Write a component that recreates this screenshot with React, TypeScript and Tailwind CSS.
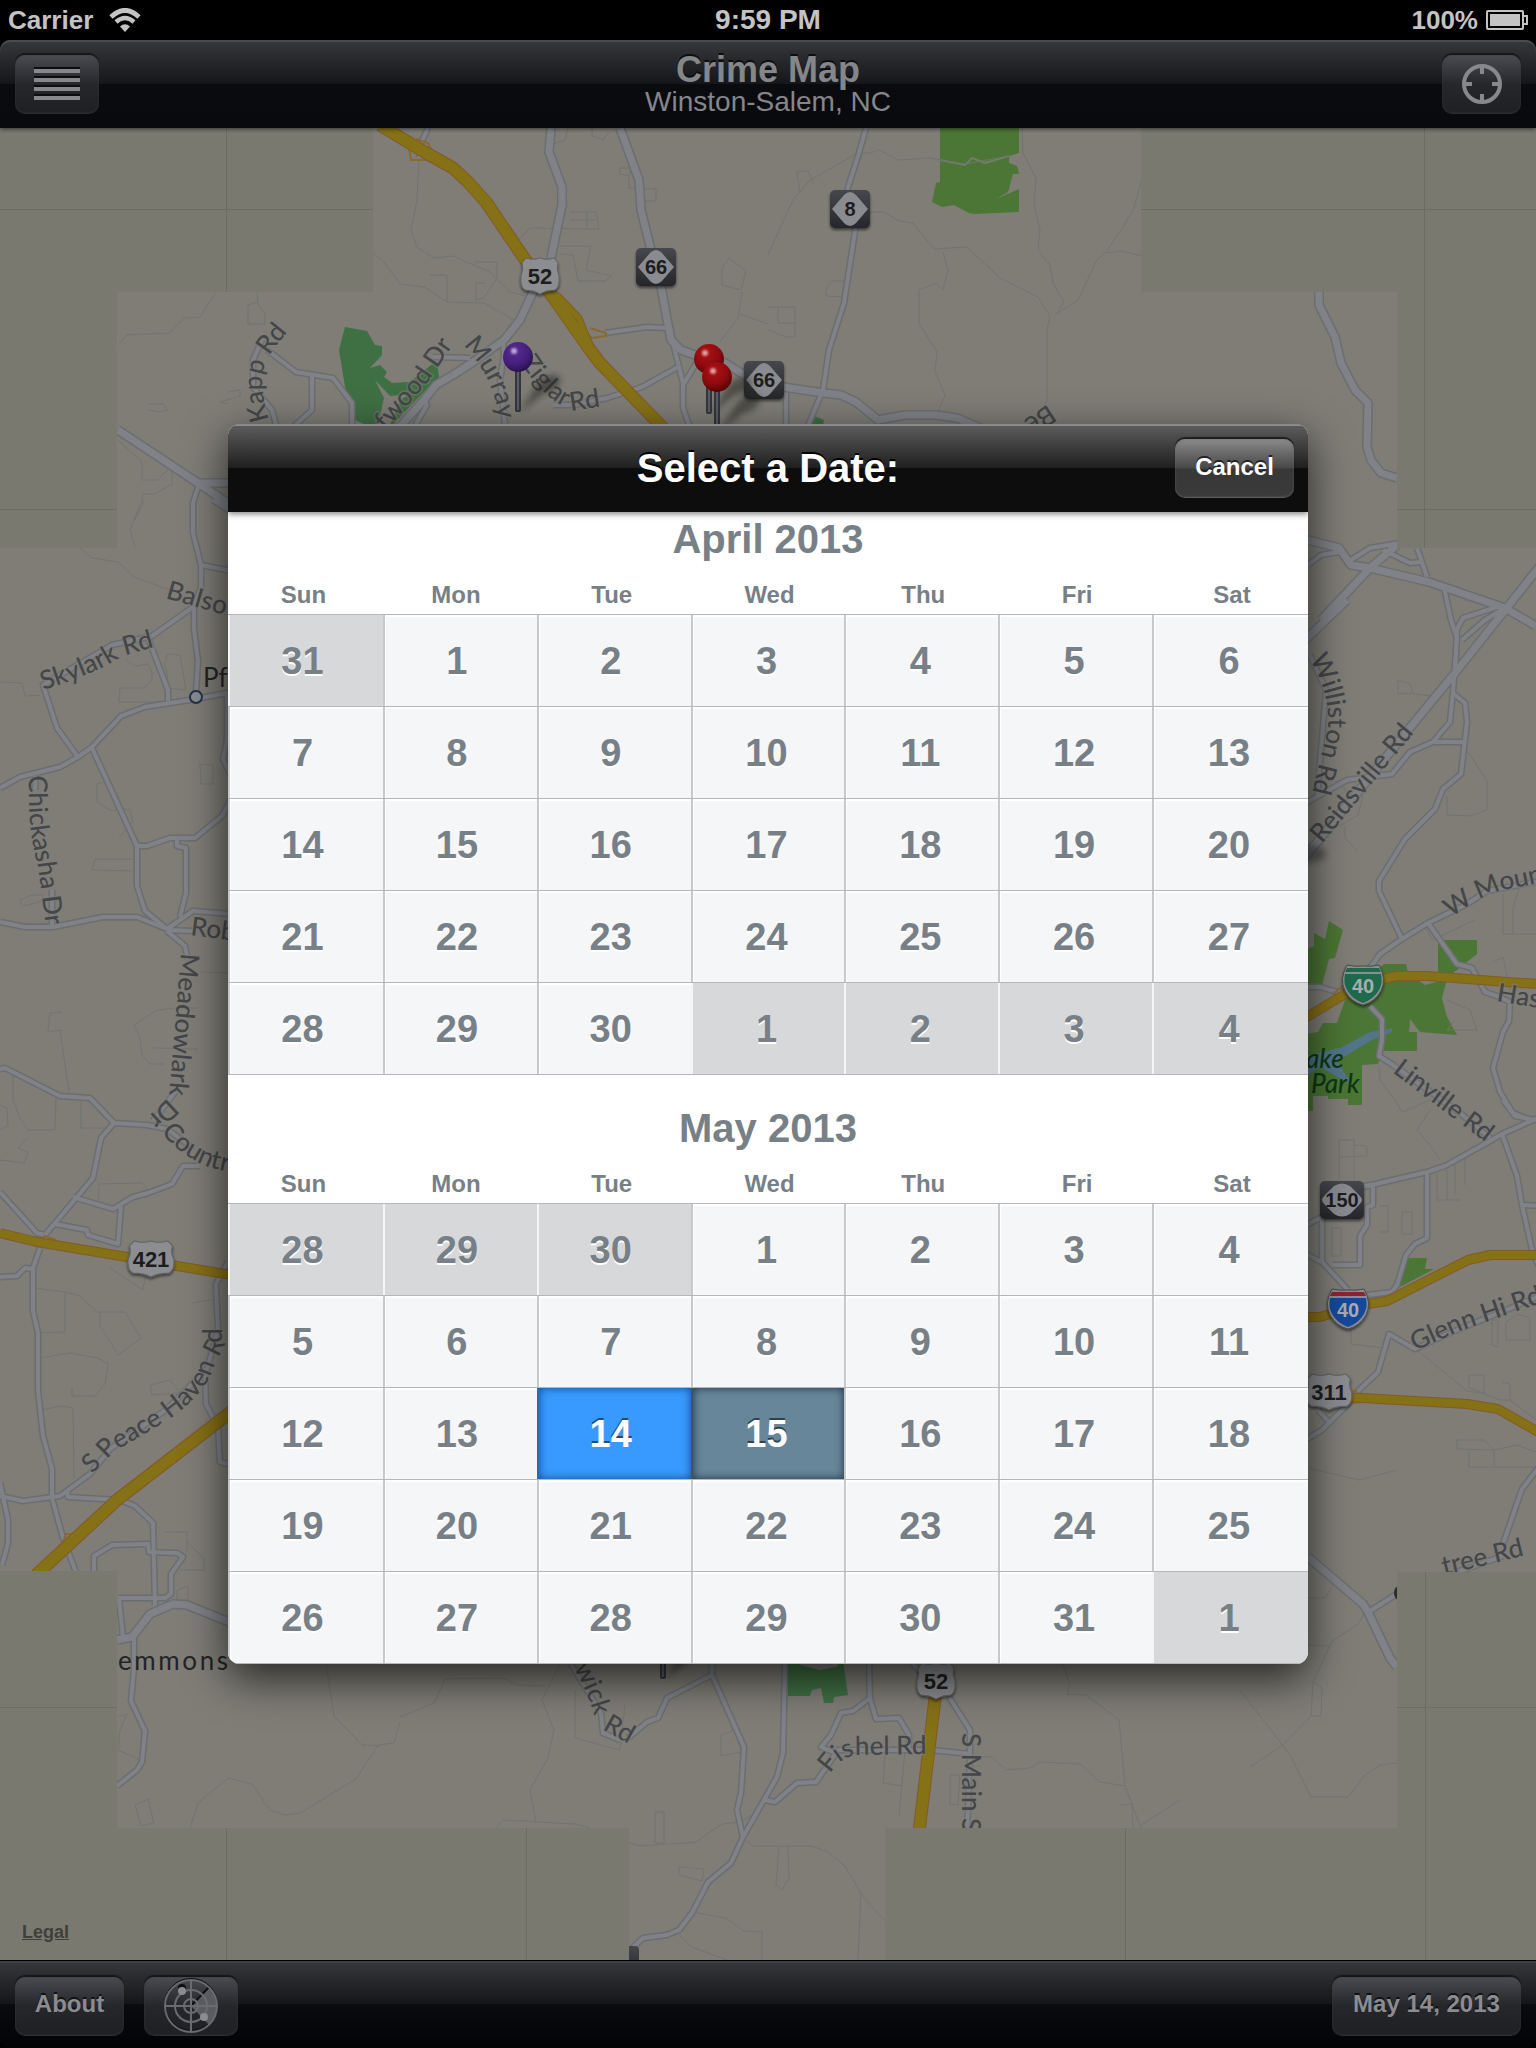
import React from "react";

const WEEKDAYS = ["Sun", "Mon", "Tue", "Wed", "Thu", "Fri", "Sat"];

type Kind = "in" | "out" | "selected" | "today";
type Day = { n: number; kind: Kind };
type Month = { title: string; first: number; prev: number; length: number; selected?: number; today?: number };

const MONTHS: Month[] = [
  { title: "April 2013", first: 1, prev: 31, length: 30 },
  { title: "May 2013", first: 3, prev: 30, length: 31, selected: 14, today: 15 },
];

function weeksOf(m: Month): Day[][] {
  const weeks: Day[][] = [];
  for (let w = 0; w < 5; w++) {
    const row: Day[] = [];
    for (let d = 0; d < 7; d++) {
      const n = w * 7 + d - m.first + 1;
      if (n < 1) row.push({ n: m.prev + n, kind: "out" });
      else if (n > m.length) row.push({ n: n - m.length, kind: "out" });
      else row.push({ n, kind: n === m.selected ? "selected" : n === m.today ? "today" : "in" });
    }
    weeks.push(row);
  }
  return weeks;
}

const CELL: Record<Kind, string> = {
  in: "border-l-2 border-l-[#c6c8ca] bg-[#f5f6f8] text-[#788087] shadow-[inset_1px_2px_0_#ffffff] [text-shadow:0_2px_0_#ffffff]",
  out: "border-l-2 border-l-[#f4f5f6] bg-[#d7d8da] text-[#788087] [text-shadow:0_2px_0_#ffffff]",
  selected:
    "border-l-2 border-l-[#2a6cb0] bg-[#3899fe] text-white shadow-[inset_0_0_8px_rgba(0,30,70,0.65)] [text-shadow:0_-2px_0_#2a4a6c]",
  today:
    "border-l-2 border-l-[#3f5462] bg-[#67869a] text-white shadow-[inset_0_0_8px_rgba(0,20,40,0.75)] [text-shadow:0_-2px_0_#2f4250]",
};

const DAY_PAD = ["pr-2", "pr-2", "pr-2", "pr-1", "pr-1", "pr-1", "pr-1"];
const HEAD_PAD = ["pr-1", "pr-2", "pr-1", "pl-1", "pl-1", "pl-1", "pl-1"];

function MonthGrid({ month }: { month: Month }) {
  return (
    <table className="w-full table-fixed border-separate border-spacing-0 border-b border-[#b5b7ba]">
      <caption className="h-[58px] pt-[3px] text-center text-[40px] leading-[48px] font-bold text-[#788087]">
        {month.title}
      </caption>
      <colgroup>
        <col className="w-[155px]" />
        <col />
        <col />
        <col />
        <col />
        <col />
        <col className="w-[156px]" />
      </colgroup>
      <thead>
        <tr>
          {WEEKDAYS.map((d, j) => (
            <th
              key={d}
              scope="col"
              className={"h-[44px] pt-[6px] text-center text-2xl leading-8 font-bold text-[#788087] " + HEAD_PAD[j]}
            >
              {d}
            </th>
          ))}
        </tr>
      </thead>
      <tbody>
        {weeksOf(month).map((week, i) => (
          <tr key={i}>
            {week.map((day, j) => (
              <td key={j} className="h-[92px] border-t border-[#b5b7ba] p-0">
                <button
                  type="button"
                  className={
                    "block h-[91px] w-full text-center text-[38px] leading-[46px] font-bold " +
                    DAY_PAD[j] +
                    " " +
                    CELL[day.kind]
                  }
                >
                  {day.n}
                </button>
              </td>
            ))}
          </tr>
        ))}
      </tbody>
    </table>
  );
}

/* ---------- map drawing ---------- */

const ROADS: { w: number; d: string[] }[] = [
  {
    w: 7,
    d: [
      "551,128 549,152 562,187 562,205 551,258",
      "534,290 520,320 504,340 473,362 453,375 436,385 424,400 397,430",
      "620,128 639,180 641,210 651,250 661,287 671,340 681,350 695,355 725,363 749,378 783,387 824,393 841,395 856,402 878,420 905,415 935,415 957,418 985,430",
      "1319,292 1319,305 1335,337 1341,363 1355,390 1368,403 1367,447 1371,460 1381,473 1397,478",
      "118,430 201,485 232,506",
      "201,483 232,483",
      "117,1640 132,1637 150,1614 173,1604 187,1605 232,1623",
      "1300,538 1339,548 1351,565 1370,568 1429,582 1505,608 1536,626",
      "1397,545 1370,568 1321,620",
      "1308,1557 1363,1604 1368,1612 1390,1658 1397,1667",
      "1540,566 1513,600 1455,673 1413,724 1300,863",
      "1347,600 1304,641",
    ],
  },
  {
    w: 4,
    d: [
      "428,128 421,143 419,158",
      "673,343 683,383 683,408 691,430",
      "683,385 697,362",
      "605,333 647,327 666,328",
      "553,405 573,405 607,398 642,387 678,367",
      "866,128 859,153 844,200",
      "856,225 844,303 829,350 823,390 807,428",
      "786,393 786,428",
      "433,357 470,358",
      "267,350 296,372 333,378 352,403 352,424",
      "312,373 312,410 292,428",
      "262,340 253,360 253,387 272,410 277,428",
      "503,338 504,355 500,380 505,424",
      "424,400 427,405 415,426",
      "198,487 193,503 193,533 201,565 201,587 194,607 194,629 198,661 196,692",
      "201,565 232,571",
      "213,500 232,512",
      "193,607 152,636 112,645 43,685 57,728 78,757",
      "148,638 168,690 168,701",
      "0,788 20,777 60,767 78,757 92,747 121,716 145,707 196,699 232,692",
      "92,748 137,846 137,886 145,911 167,929",
      "137,846 147,846 170,838 195,838 222,816 232,798",
      "177,838 177,846 186,848 186,893 180,917",
      "0,922 25,927 53,927 103,917 137,917 167,929 193,911 232,914",
      "167,930 192,931",
      "167,931 185,946 188,960",
      "227,692 227,741 223,759 232,778",
      "35,790 36,776",
      "52,890 52,925",
      "0,1069 5,1068 60,1096 90,1098 114,1123 147,1125 167,1129 190,1146",
      "175,1092 153,1121",
      "114,1123 101,1138 93,1178 45,1235",
      "0,1192 37,1233 45,1235",
      "73,1197 113,1209 133,1197 148,1193 172,1184 183,1166 200,1166",
      "121,1206 118,1244 88,1235 87,1230 55,1224",
      "40,1248 33,1268 33,1311 38,1333 38,1391 43,1436 52,1469 52,1498 63,1538 77,1575",
      "0,1277 17,1276 25,1268 33,1269",
      "228,1262 216,1284 218,1330 207,1369 167,1409 110,1449 90,1474 60,1496 23,1501 0,1496",
      "205,1369 206,1404 218,1427 220,1462 232,1465",
      "67,1490 68,1497 120,1500 135,1506 153,1523 155,1605",
      "0,1483 8,1520 8,1543 2,1565",
      "94,1575 94,1556 112,1545 148,1544 149,1552 177,1553 183,1557 171,1574 171,1594 165,1598 118,1598",
      "119,1599 123,1637",
      "134,1637 134,1668 131,1701 145,1731 142,1762 137,1770 117,1786",
      "1308,565 1321,555 1339,552",
      "1351,560 1370,548 1400,543",
      "1383,550 1410,563 1422,562",
      "1417,548 1427,577",
      "1444,587 1451,620 1457,638 1453,692 1450,722 1433,742 1410,752 1392,774 1347,780 1300,806",
      "1310,655 1326,690 1318,785 1318,796",
      "1500,606 1463,618 1457,629 1455,673",
      "1505,608 1485,620 1462,640",
      "1454,694 1465,703 1467,722 1461,774 1443,789 1435,809 1405,839 1379,881 1379,891 1402,939",
      "1433,742 1463,742",
      "1360,980 1373,964 1380,954 1402,939 1428,923 1467,904 1487,891 1540,881",
      "1428,923 1457,964 1472,968 1485,992 1497,996 1510,1002 1509,1021 1503,1032 1493,1068 1500,1092 1513,1113 1530,1120",
      "1300,987 1320,987 1337,992 1350,992",
      "1370,1006 1382,1019 1382,1040 1379,1056 1393,1065 1460,1113 1490,1138",
      "1350,1190 1363,1187 1397,1179 1427,1172 1445,1166 1483,1145 1502,1134 1540,1117",
      "1502,1134 1517,1176 1522,1205 1533,1254 1540,1268",
      "1522,1205 1540,1206",
      "1503,1100 1515,1116 1540,1121",
      "1427,1174 1427,1238 1415,1244 1406,1255 1397,1285 1392,1292 1367,1295",
      "1362,1186 1373,1185 1373,1205 1367,1207 1367,1225 1360,1236 1360,1265 1333,1265",
      "1300,1228 1322,1217 1322,1261",
      "1300,1254 1308,1255 1323,1263 1348,1290",
      "1357,1392 1378,1372 1389,1334 1415,1349 1445,1335 1540,1296",
      "1300,1443 1322,1430 1350,1402",
      "1318,1410 1328,1421",
      "1540,1466 1522,1489 1503,1544",
      "1440,1578 1503,1556",
      "1370,1611 1400,1592",
      "712,1660 712,1675 744,1747 741,1793 737,1810 743,1837",
      "712,1675 667,1698 658,1718 647,1722 628,1738",
      "785,1660 783,1753 777,1777 743,1837 731,1863 708,1882 692,1913 679,1930 667,1935 643,1938 628,1952",
      "765,1800 775,1802 797,1783 816,1782 836,1753 821,1747 831,1735 841,1713 853,1711 870,1698 869,1660",
      "870,1698 876,1719 899,1718 909,1735 909,1752",
      "836,1750 931,1750 971,1754",
      "949,1697 970,1730 970,1757 967,1832",
      "910,1660 920,1672",
      "571,1664 601,1713 603,1733 620,1740",
    ],
  },
];

const LANES = [
  "419,158 417,200 411,230 417,247 434,258 453,256 490,272 510,292 525,296",
  "373,253 384,262 400,284 424,287 447,302 484,303 514,320",
  "474,262 497,262 497,278 484,298 476,300 476,283 485,283",
  "430,275 447,275 447,302",
  "560,246 591,246 586,270 612,276 605,281 578,281 573,255 560,254",
  "519,240 530,228 599,229 596,212 570,212",
  "587,212 587,228",
  "570,220 595,220",
  "550,145 565,140 568,128",
  "620,168 630,168 630,176 620,174 620,168",
  "629,176 629,188 656,189 656,201 641,201",
  "592,128 592,136 603,140 609,132",
  "722,285 722,268 729,258 746,271 741,290 722,285",
  "742,292 738,318 720,342",
  "740,314 768,324",
  "768,255 793,200 810,180 858,153 870,153 879,150 899,160 930,158 965,164 1009,156",
  "800,193 797,172 808,171 814,184",
  "856,212 884,212 899,221 913,223 934,249 967,247 1000,278 1038,297 1050,316 1047,330 1047,400 1042,412",
  "943,252 948,270 943,290 936,283 919,290 919,323 937,352 935,372 945,395 938,412",
  "1022,128 1023,153 1036,178 1034,205 1040,230 1038,250 1050,265 1053,283 1064,302 1057,314",
  "1055,315 1078,300 1097,260 1106,252 1123,227 1134,208 1141,182",
  "1106,253 1122,251 1141,256",
  "844,281 832,281 826,290 826,296 843,297",
  "768,307 795,307 795,337 786,337 768,330",
  "778,307 778,323 795,323",
  "216,292 200,317 184,318 169,333 127,335 118,345",
  "257,292 258,304 265,314 265,324 248,324 248,305 257,302",
  "118,440 142,462 142,480 158,480 172,465 172,484 155,494 142,494 143,503 135,520",
  "148,404 163,404 168,410 160,412 148,410",
  "142,500 130,530 135,547",
  "228,404 220,402 240,396 240,390 228,392",
  "80,548 92,558 118,562 134,577 170,590",
  "0,682 22,683 25,696 40,695",
  "126,660 135,666 148,664 152,672 152,680 145,688 120,688 119,702 168,702",
  "167,654 180,655 186,690 168,688 167,672 165,665 167,654",
  "200,764 213,765 213,784 201,784 200,764",
  "97,784 104,782 119,797 118,808 130,810 133,821 119,838",
  "119,810 110,810 97,802 97,784",
  "137,859 95,859 92,870 137,871",
  "20,900 32,895 44,895 40,902 22,906 20,900",
  "62,1012 50,1013 48,1032 60,1030 69,1092",
  "198,1008 175,1008 157,1010 134,1025 140,1038 142,1055 150,1064 165,1064",
  "153,1048 198,1049",
  "200,972 228,973",
  "13,1075 13,1100 20,1118 28,1130 55,1130 56,1096",
  "81,1100 81,1128 112,1128",
  "0,1105 7,1108 8,1126 0,1130",
  "28,1137 18,1148 28,1152 24,1163 0,1160",
  "98,1200 99,1184 142,1183 150,1192",
  "35,1288 65,1292 65,1332 38,1333",
  "65,1292 80,1296 97,1312 125,1312 141,1338 118,1355 108,1338 100,1326 100,1312",
  "40,1358 70,1353 98,1358 108,1364 105,1384 95,1396 72,1396 72,1388",
  "73,1408 74,1478",
  "42,1410 60,1406 73,1408",
  "150,1385 170,1380 180,1393 152,1395 150,1385",
  "192,1303 215,1299",
  "110,1268 143,1290 145,1278",
  "165,1532 187,1532 187,1552",
  "187,1542 204,1558 204,1570 180,1570",
  "177,1590 177,1600 188,1600 188,1586 177,1590",
  "118,1717 127,1714 120,1730 118,1750 140,1760",
  "135,1805 148,1799 154,1823 141,1826 135,1805",
  "190,1828 198,1803 228,1778 252,1784 270,1810 284,1815 300,1813 356,1779 378,1745 394,1743 400,1722",
  "326,1664 334,1716 362,1745 380,1746",
  "400,1717 434,1703 445,1679 503,1678 517,1685 545,1686",
  "560,1664 542,1700 554,1730 548,1758 530,1790 536,1822",
  "496,1828 503,1820 575,1824 590,1828",
  "575,1690 575,1738 620,1750 625,1705",
  "655,1812 664,1812 664,1843 655,1843 655,1812",
  "629,1843 640,1846 696,1842 722,1824 740,1822 752,1815",
  "743,1838 753,1846 812,1846 828,1852 845,1866 861,1893 868,1903 885,1921",
  "861,1893 858,1960",
  "779,1846 776,1885 782,1890 789,1878 788,1846",
  "679,1867 704,1869 702,1881 679,1875 679,1867",
  "692,1912 726,1918 744,1931 762,1932 762,1960",
  "679,1935 692,1947 727,1960",
  "885,1755 883,1783 902,1786",
  "905,1750 900,1805 899,1816",
  "1063,1664 1070,1685 1067,1694 1086,1695 1119,1720 1125,1786 1141,1828",
  "970,1757 992,1757 1006,1770 1030,1768 1040,1762 1080,1764 1100,1782 1125,1786",
  "1141,1825 1180,1800",
  "950,1775 960,1775 958,1805 950,1804 950,1775",
  "1119,1805 1132,1804 1133,1828",
  "721,1735 735,1730 741,1752 721,1756 721,1735",
  "1398,680 1410,684 1413,693 1398,694 1398,680",
  "1413,694 1432,696",
  "1450,740 1468,752 1487,781 1487,810 1470,816 1447,815 1447,796",
  "1340,780 1348,795 1363,795 1358,815 1340,826",
  "1345,826 1345,838 1356,850",
  "1465,600 1490,606",
  "1503,894 1503,934 1540,934",
  "1520,885 1513,908 1513,934",
  "1493,962 1503,957 1510,990",
  "1475,920 1432,940 1425,925",
  "1447,1000 1470,1010 1477,1030 1447,1030 1455,1020",
  "1379,1066 1380,1080 1395,1100 1402,1112 1430,1100",
  "1430,1110 1417,1130 1430,1145 1440,1160",
  "1339,1140 1354,1140 1354,1145 1367,1146 1367,1156 1339,1157",
  "1339,1140 1339,1180",
  "1354,1145 1354,1180",
  "1437,1174 1437,1200 1460,1200",
  "1447,1170 1447,1200",
  "1455,1160 1455,1195",
  "1465,1155 1465,1185",
  "1380,1206 1388,1206 1388,1232 1380,1232",
  "1402,1212 1412,1212 1412,1234 1402,1234 1402,1212",
  "1332,1228 1341,1228 1341,1256 1332,1256 1332,1228",
  "1351,1320 1351,1344 1382,1348",
  "1417,1350 1467,1391 1482,1393 1500,1400 1510,1400 1540,1423",
  "1469,1375 1484,1375 1484,1393 1469,1388 1469,1375",
  "1502,1382 1510,1384 1510,1400",
  "1492,1320 1498,1320 1498,1347 1492,1345 1492,1320",
  "1506,1340 1506,1322 1518,1314 1530,1318 1530,1340 1506,1340",
  "1457,1440 1484,1440 1494,1450 1517,1445 1536,1452",
  "1457,1440 1457,1449 1494,1450 1494,1467 1540,1467",
  "1469,1450 1469,1467 1494,1467",
  "1308,1468 1359,1480 1397,1470",
  "1308,1598 1325,1598 1335,1582",
  "1365,1612 1358,1624 1332,1641 1313,1682 1322,1688 1321,1716 1311,1716 1313,1682",
  "1308,1645 1330,1646",
  "1311,1716 1283,1745 1250,1767",
  "1240,1690 1290,1755 1311,1797 1348,1797 1365,1775 1380,1765 1397,1763",
];

const HIGHWAYS: { w: number; d: string[] }[] = [
  {
    w: 11,
    d: [
      "380,125 421,150 453,168 468,182 486,202 524,258 553,297 588,347 600,363 665,430",
      "232,1411 117,1500 36,1575",
      "936,1690 919,1832",
    ],
  },
  {
    w: 5,
    d: ["557,295 579,318 592,350"],
  },
  {
    w: 8,
    d: [
      "0,1233 37,1242 127,1257 177,1266 232,1275",
      "1300,1021 1345,994 1383,979 1397,976 1427,976 1507,982 1540,984",
      "1300,1317 1320,1317 1330,1314 1368,1304 1387,1301 1468,1260 1490,1255 1540,1255",
      "1345,1397 1467,1404 1498,1409 1540,1433",
    ],
  },
];

const RAMPS = [
  "409,147 411,160 425,160 434,155 428,143 416,139",
  "583,330 592,338 606,336 606,333 590,328",
  "37,1242 45,1236 56,1240",
  "56,1560 66,1534 76,1534",
  "1333,994 1345,984",
  "1345,1391 1357,1391",
  "1345,1404 1380,1400",
];

const LABELS: { id: string; text: string; d: string }[] = [
  { id: "kapp", text: "Kapp Rd", d: "M269,420 Q256,378 268,358 Q276,344 300,318" },
  { id: "drift", text: "fwood Dr", d: "M386,431 L428,382 L466,326" },
  { id: "murray", text: "Murray R", d: "M463,345 Q490,374 496,404 L506,470" },
  { id: "ziglar", text: "Ziglar Rd", d: "M520,362 Q550,408 578,410 L630,402" },
  { id: "bethania", text: "Be", d: "M1048,404 L990,442" },
  { id: "balsom", text: "Balso", d: "M165,598 L228,616 L300,636" },
  { id: "skylark", text: "Skylark Rd", d: "M43,690 Q96,674 122,656 L180,640" },
  { id: "chick", text: "Chickasha Dr", d: "M29,775 Q27,830 38,866 L49,950" },
  { id: "rob", text: "Rob", d: "M190,935 L228,940 L350,950" },
  { id: "meadow", text: "Meadowlark", d: "M181,953 L168,1110" },
  { id: "meadowdr", text: "Dr", d: "M168,1098 L136,1128" },
  { id: "country", text: "Country", d: "M161,1132 Q182,1158 212,1168 L310,1190" },
  { id: "peace", text: "S Peace Haven Rd", d: "M92,1474 L114,1452 L168,1420 Q206,1394 214,1366 L222,1350 L222,1280" },
  { id: "willis", text: "Williston Rd", d: "M1309,659 Q1330,690 1328,728 L1308,810" },
  { id: "reids", text: "Reidsville Rd", d: "M1322,844 L1438,704" },
  { id: "mount", text: "W Moun", d: "M1451,918 Q1480,896 1504,890 L1700,850" },
  { id: "hast", text: "Has", d: "M1496,1001 L1600,1018" },
  { id: "linv", text: "Linville Rd", d: "M1392,1072 L1510,1161" },
  { id: "glenn", text: "Glenn Hi Rd", d: "M1415,1351 L1460,1331 L1570,1293" },
  { id: "tree", text: "tree Rd", d: "M1444,1575 L1478,1567 L1550,1549" },
  { id: "warwick", text: "arwick", d: "M560,1650 Q594,1690 601,1750" },
  { id: "warwickrd", text: "Rd", d: "M602,1729 L650,1756" },
  { id: "fishel", text: "Fishel Rd", d: "M830,1774 Q842,1754 862,1755 L940,1754" },
  { id: "smain", text: "S Main S", d: "M962,1733 L962,1870" },
];

const MAP_FONT = "font-['Lato','Open_Sans',sans-serif]";
const UI_FONT = "font-['Liberation_Sans',Arial,sans-serif]";

function UsShield({ x, y, text, sx = 1 }: { x: number; y: number; text: string; sx?: number }) {
  return (
    <g transform={`translate(${x} ${y})`}>
      <g transform={`scale(${sx} 1)`}>
        <path
          d="M-14,-18 L-10,-17 Q-5,-16 0,-18 Q5,-16 10,-17 L14,-18 L18,-13 Q16,-7 19,0 Q20,11 15,14 Q6,14 0,18 Q-6,14 -15,14 Q-20,11 -19,0 Q-16,-7 -18,-13Z"
          fill="#8c8d91"
          stroke="#626366"
          strokeWidth="1"
          filter="url(#drop)"
        />
      </g>
      <text y="8" textAnchor="middle" fill="#1c1d20" className={"text-[22px] font-bold " + UI_FONT}>
        {text}
      </text>
    </g>
  );
}

function StateShield({ x, y, text, wide = false }: { x: number; y: number; text: string; wide?: boolean }) {
  return (
    <g transform={`translate(${x} ${y})`}>
      <rect x={wide ? -22 : -20} y="-19" width={wide ? 44 : 40} height="38" rx="5" fill="url(#plate)" filter="url(#drop)" />
      <path
        d={
          wide
            ? "M-20,0 Q-20,-2 -17,-5 L-8,-14 Q0,-19 8,-14 L17,-5 Q20,-2 20,0 Q20,2 17,5 L8,14 Q0,19 -8,14 L-17,5 Q-20,2 -20,0Z"
            : "M-18,0 L-6,-14 Q0,-20 6,-14 L18,0 L6,14 Q0,20 -6,14Z"
        }
        fill="#8a8b90"
      />
      <text y="7" textAnchor="middle" fill="#1c1d20" className={"text-xl font-bold " + UI_FONT}>
        {text}
      </text>
    </g>
  );
}

function Interstate({ x, y, fill, band }: { x: number; y: number; fill: string; band: string }) {
  return (
    <g transform={`translate(${x} ${y})`}>
      <path
        d="M-16,-20 Q-8,-18 0,-19 Q8,-18 16,-20 Q24,-6 18,6 Q12,17 0,20 Q-12,17 -18,6 Q-24,-6 -16,-20Z"
        fill="#8c8e91"
        stroke="#4a4b4e"
        filter="url(#drop)"
      />
      <path d="M-16,-17 H16 L18,-13 H-18Z" fill={band} />
      <path d="M-18,-11 H18 Q20,-2 16,5 Q11,14 0,18 Q-11,14 -16,5 Q-20,-2 -18,-11Z" fill={fill} />
      <text y="8" textAnchor="middle" fill="#a8acaf" className={"text-xl font-bold " + UI_FONT}>
        40
      </text>
    </g>
  );
}

function Pin({ x, y, color, stem = 55 }: { x: number; y: number; color: "red" | "purple"; stem?: number }) {
  return (
    <g transform={`translate(${x} ${y})`}>
      <path d={`M2,${stem} L20,26 Q30,14 42,20 Q44,32 26,36 Z`} fill="#1a1a18" opacity="0.5" filter="url(#soft)" />
      <rect x="-3" y="10" width="6" height={stem - 10} rx="2" fill="#33363d" />
      <rect x="-1" y="10" width="2" height={stem - 12} fill="#595d65" />
      <circle r="15" fill={color === "red" ? "url(#pinRed)" : "url(#pinPurple)"} />
      <ellipse cx="-4" cy="-6" rx="3" ry="3" fill="#ffffff" opacity="0.6" filter="url(#shine)" />
    </g>
  );
}

function CrimeMap() {
  return (
    <svg
      className="absolute inset-0 h-full w-full"
      viewBox="0 128 1536 1832"
      preserveAspectRatio="xMidYMid slice"
      role="img"
      aria-label="Map of Winston-Salem"
    >
      <defs>
        <filter id="drop" x="-30%" y="-30%" width="160%" height="170%">
          <feDropShadow dx="0" dy="2" stdDeviation="1.5" floodColor="#000000" floodOpacity="0.55" />
        </filter>
        <filter id="soft" x="-50%" y="-50%" width="200%" height="200%">
          <feGaussianBlur stdDeviation="3" />
        </filter>
        <filter id="shine" x="-50%" y="-50%" width="200%" height="200%">
          <feGaussianBlur stdDeviation="1.2" />
        </filter>
        <linearGradient id="plate" x1="0" y1="0" x2="0" y2="1">
          <stop offset="0" stopColor="#46474c" />
          <stop offset="1" stopColor="#26272b" />
        </linearGradient>
        <radialGradient id="pinRed" cx="0.4" cy="0.3" r="0.75">
          <stop offset="0" stopColor="#b01216" />
          <stop offset="0.6" stopColor="#8c0a0e" />
          <stop offset="1" stopColor="#4c0406" />
        </radialGradient>
        <radialGradient id="pinPurple" cx="0.4" cy="0.3" r="0.75">
          <stop offset="0" stopColor="#5a2c94" />
          <stop offset="0.6" stopColor="#43207a" />
          <stop offset="1" stopColor="#260f48" />
        </radialGradient>
        {LABELS.map((l) => (
          <path key={l.id} id={l.id} d={l.d} />
        ))}
      </defs>

      <rect y="128" width="1536" height="1832" fill="#7f7d76" />

      <g fill="#4c7635">
        <path d="M940,128 V182 L936,183 L932,202 L942,207 L954,205 L969,213 L974,214 L1019,212 V189 L996,199 L1008,192 L1013,174 H1019 L1017,166 L1009,163 V156 L1019,153 V128Z" />
        <path d="M1329,921 L1343,930 L1335,958 L1329,959 L1322,985 L1300,983 V952 L1314,946 V933 L1325,939Z" />
        <path d="M1384,964 H1406 L1408,973 L1425,985 L1447,979 L1442,998 L1447,1017 L1457,1035 L1420,1032 L1410,1019 L1409,1032 H1417 V1051 H1383 L1378,1064 L1362,1065 V1105 H1348 V1099 H1328 V1096 H1313 V1111 H1300 V1035 L1318,1032 L1323,1023 H1337 L1345,1000Z" />
        <path d="M1438,940 H1477 V954 L1453,973 H1438Z" />
        <path d="M1408,1258 H1427 L1425,1269 H1434 L1398,1288Z" />
        <path d="M1348,1098 H1361 V1104 H1348Z" />
      </g>
      <g fill="#3f7043">
        <path d="M345,327 L367,331 L375,345 L382,346 V355 L370,368 L380,365 L387,372 L384,377 L392,383 L409,382 L419,375 L431,365 L437,363 L439,377 L416,400 L388,430 L400,400 L410,394 L390,396 L375,380 L384,398 L377,430 L355,420 L345,387 L339,350Z" />
        <path d="M788,1660 H843 L848,1695 L834,1697 L833,1703 H824 L821,1688 L812,1690 L810,1696 H788Z" />
        <path d="M814,416 L824,420 L822,430 H810Z" />
      </g>
      <path d="M788,1660 H843 L836,1667 L820,1670 L804,1666Z" fill="#7f7d76" />
      <path
        d="M1300,1057 L1340,1048 L1370,1032 L1392,1028 V1032 L1372,1040 L1337,1061 L1353,1086 L1320,1067 L1300,1080Z"
        fill="#53758a"
      />
      <path d="M940,160 L965,165 L972,158 L985,163 L1009,156" fill="none" stroke="#6f7f68" strokeWidth="2" />

      <g fill="none" stroke="#71746f" strokeWidth="1">
        {LANES.map((p) => (
          <polyline key={p} points={p} />
        ))}
      </g>

      <g fill="none" strokeLinejoin="round" stroke="#6b6e71">
        {ROADS.map((r) => r.d.map((p) => <polyline key={p} points={p} strokeWidth={r.w + 3} />))}
      </g>
      <g fill="none" strokeLinejoin="round" stroke="#808287">
        {ROADS.map((r) => r.d.map((p) => <polyline key={p} points={p} strokeWidth={r.w} />))}
      </g>
      <g fill="none" stroke="#8a6a30" strokeWidth="2">
        {RAMPS.map((p) => (
          <polyline key={p} points={p} />
        ))}
      </g>
      <g fill="none" strokeLinejoin="round" stroke="#84592a">
        {HIGHWAYS.map((r) => r.d.map((p) => <polyline key={p} points={p} strokeWidth={r.w + 2} />))}
      </g>
      <g fill="none" strokeLinejoin="round" stroke="#857116">
        {HIGHWAYS.map((r) => r.d.map((p) => <polyline key={p} points={p} strokeWidth={r.w} />))}
      </g>

      <g
        fill="#454648"
        stroke="#807f7a"
        strokeWidth="3"
        strokeOpacity="0.5"
        paintOrder="stroke"
        className={"text-[26px] font-medium " + MAP_FONT}
      >
        {LABELS.map((l) => (
          <text key={l.id}>
            <textPath href={"#" + l.id}>{l.text}</textPath>
          </text>
        ))}
      </g>
      <text x="203" y="687" fill="#232426" className={"text-[26px] " + MAP_FONT}>
        Pf
      </text>
      <text x="118" y="1670" fill="#232426" className={"text-[26px] tracking-widest " + MAP_FONT}>
        emmons
      </text>
      <g fill="#0b3a12" className={"text-[26px] font-medium italic " + MAP_FONT}>
        <text x="1306" y="1068">ake</text>
        <text x="1311" y="1093">Park</text>
      </g>
      <circle cx="196" cy="697" r="6" fill="#8a8c8e" stroke="#22334a" strokeWidth="2" />
      <ellipse cx="1399" cy="1593" rx="5" ry="7" fill="#2c2d2e" />
      <ellipse cx="1308" cy="854" rx="18" ry="9" fill="#1c1c1a" opacity="0.4" filter="url(#soft)" />
      <rect x="610" y="1946" width="29" height="30" rx="4" fill="url(#plate)" />

      <g fill="#7a796f">
        <path d="M0,128 H373 V292 H117 V548 H0Z" />
        <path d="M1141,128 H1536 V548 H1397 V292 H1141Z" />
        <path d="M0,1571 H117 V1828 H629 V1960 H0Z" />
        <path d="M1397,1572 H1536 V1960 H885 V1828 H1397Z" />
      </g>
      <g fill="none" stroke="#6d6c62" strokeWidth="1">
        <path d="M0,209.500 H373 M226.500,128 V292 M0,509.500 H117" />
        <path d="M1141,209.500 H1536 M1424.500,128 V548 M1397,509.500 H1536" />
        <path d="M0,1707.500 H117 M226.500,1828 V1960 M526.500,1828 V1960" />
        <path d="M1397,1707.500 H1536 M1425.500,1572 V1960 M1125.500,1828 V1960" />
      </g>

      <StateShield x={656} y={267} text="66" />
      <StateShield x={764} y={380} text="66" />
      <StateShield x={850} y={209} text="8" />
      <StateShield x={1342} y={1200} text="150" wide />
      <UsShield x={540} y={276} text="52" />
      <UsShield x={936} y={1681} text="52" />
      <UsShield x={151} y={1259} text="421" sx={1.2} />
      <UsShield x={1329} y={1392} text="311" sx={1.2} />
      <Interstate x={1363} y={985} fill="#1d6a4c" band="#1d6a4c" />
      <Interstate x={1348} y={1309} fill="#14499c" band="#8c2430" />

      <Pin x={518} y={357} color="purple" />
      <Pin x={709} y={359} color="red" />
      <Pin x={717} y={377} color="red" />
      <Pin x={663} y={1624} color="red" />
    </svg>
  );
}

/* ---------- chrome ---------- */

const BAR_BUTTON =
  "flex h-[58px] items-center justify-center rounded-[10px] bg-linear-to-b from-[#4b4c51] from-0% via-[#26272b] via-50% to-[#1f2024] text-2xl font-bold text-[#8b8c90] shadow-[0_-2px_1px_rgba(0,0,0,0.5),0_1px_0_#2c2d31,inset_0_0_2px_#3a3b3f] [text-shadow:0_-2px_0_#101114]";

function StatusBar() {
  return (
    <div className="grid h-10 grid-cols-3 items-center bg-black px-2 font-bold text-[#c3c3c3]">
      <div className="flex items-center gap-4 text-[26px] leading-10">
        <span>Carrier</span>
        <svg width="32" height="24" viewBox="0 0 32 24" fill="none" stroke="#c3c3c3" aria-label="Wi-Fi">
          <path d="M2,9 Q16,-4 30,9" strokeWidth="5" />
          <path d="M7,14 Q16,6 25,14" strokeWidth="4.500" />
          <path d="M16,24 L11,18.500 Q16,14 21,18.500Z" fill="#c3c3c3" stroke="none" />
        </svg>
      </div>
      <div className="text-center text-[28px] leading-10">9:59 PM</div>
      <div className="flex items-center justify-end gap-2 text-[26px] leading-10">
        <span>100%</span>
        <svg width="42" height="20" viewBox="0 0 42 20" aria-label="Battery full">
          <rect x="1" y="1" width="36" height="18" rx="1" fill="none" stroke="#c3c3c3" strokeWidth="2" />
          <rect x="4" y="4" width="30" height="12" fill="#c3c3c3" />
          <path d="M38,6 H41 V14 H38" fill="none" stroke="#c3c3c3" strokeWidth="2" />
        </svg>
      </div>
    </div>
  );
}

function NavBar() {
  return (
    <header className="relative z-10 grid h-[88px] grid-cols-[1fr_auto_1fr] items-center rounded-t-[10px] bg-[linear-gradient(#37383c_0%,#151619_50%,#0a0b0f_50%,#090a0e_100%)] px-[15px] shadow-[inset_0_2px_0_#4a4b4f,0_1px_4px_rgba(0,0,0,0.6)]">
      <button type="button" aria-label="Menu" className={BAR_BUTTON + " w-[84px]"}>
        <svg width="46" height="34" viewBox="0 0 46 34">
          <path d="M0,2 H46 M0,11 H46 M0,20 H46 M0,29 H46" stroke="#0c0d10" strokeWidth="4" />
          <path d="M0,4 H46 M0,13 H46 M0,22 H46 M0,31 H46" stroke="#87888c" strokeWidth="4" />
        </svg>
      </button>
      <div className="text-center text-[#85868a] [text-shadow:0_-2px_0_#0c0d10]">
        <h1 className="text-4xl leading-9 font-bold">Crime Map</h1>
        <p className="text-[28px] leading-7">Winston-Salem, NC</p>
      </div>
      <button type="button" aria-label="Locate" className={BAR_BUTTON + " w-[79px] justify-self-end"}>
        <svg width="42" height="42" viewBox="0 0 42 42" fill="none" stroke="#87888c" strokeWidth="4">
          <circle cx="21" cy="21" r="18" />
          <path d="M21,2 V11 M21,31 V40 M2,21 H11 M31,21 H40" />
        </svg>
      </button>
    </header>
  );
}

function RadarIcon() {
  return (
    <svg width="56" height="56" viewBox="0 0 56 56" fill="none">
      <circle cx="28" cy="27" r="26" stroke="#0d0e11" strokeWidth="2" />
      <path d="M28,28 L46,9 A26,26 0 0 1 46,47Z" fill="#5a5b60" />
      <path d="M28,28 L46,9" stroke="#0d0e11" strokeWidth="2" />
      <g stroke="#6a6b70" strokeWidth="2">
        <circle cx="28" cy="28" r="26" />
        <circle cx="28" cy="28" r="16" />
        <circle cx="28" cy="28" r="7" />
        <path d="M28,2 V54 M2,28 H54" />
      </g>
      <circle cx="19" cy="10" r="4" fill="#0d0e11" />
      <circle cx="19" cy="13" r="4" fill="#8b8c90" />
      <circle cx="41" cy="39" r="4" fill="#8b8c90" />
    </svg>
  );
}

function ToolBar() {
  return (
    <footer className="relative z-10 flex h-[88px] items-center justify-between rounded-b-[10px] border-t border-black bg-[linear-gradient(#37383c_0%,#141518_50%,#0a0b0f_50%,#020305_100%)] px-[15px] shadow-[inset_0_2px_0_#3f4044]">
      <div className="flex gap-[20px] pt-[2px]">
        <button type="button" className={BAR_BUTTON + " w-[109px] pb-1"}>
          About
        </button>
        <button type="button" aria-label="Radar" className={BAR_BUTTON + " w-[94px]"}>
          <RadarIcon />
        </button>
      </div>
      <button type="button" className={BAR_BUTTON + " mt-[2px] w-[189px] pb-1"}>
        May 14, 2013
      </button>
    </footer>
  );
}

function DateDialog() {
  return (
    <div className="absolute inset-x-0 top-10 bottom-0 z-20 flex items-center justify-center px-6">
      <section
        role="dialog"
        aria-labelledby="dialog-title"
        className="w-full max-w-[1080px] overflow-hidden rounded-[12px] bg-white shadow-[0_14px_44px_rgba(0,0,0,0.7)]"
      >
        <div className="relative z-10 grid h-[88px] grid-cols-[1fr_auto_1fr] items-center bg-[linear-gradient(#5e5e5e_0%,#1f1f1f_50%,#0d0d0d_50%,#0d0d0d_100%)] px-[14px] shadow-[inset_0_2px_0_#8a8a8a,0_2px_6px_rgba(0,0,0,0.5)]">
          <h2
            id="dialog-title"
            className="col-start-2 text-[40px] leading-[48px] font-bold text-white [text-shadow:0_-2px_0_#000000]"
          >
            Select a Date:
          </h2>
          <button
            type="button"
            className="h-[58px] w-[119px] justify-self-end rounded-[10px] bg-[linear-gradient(#8a8a8a_0%,#484848_50%,#383838_52%,#3a3a3a_100%)] pb-[2px] text-2xl font-bold text-white shadow-[0_-2px_1px_rgba(0,0,0,0.6),0_1px_0_#5a5a5a,inset_0_0_2px_#666666] [text-shadow:0_-2px_0_#222222]"
          >
            Cancel
          </button>
        </div>
        <MonthGrid month={MONTHS[0]} />
        <div className="h-[26px]" />
        <MonthGrid month={MONTHS[1]} />
      </section>
    </div>
  );
}

export default function App() {
  return (
    <div className={"relative flex min-h-screen flex-col bg-black " + UI_FONT}>
      <StatusBar />
      <NavBar />
      <main className="relative min-h-[1300px] flex-1 overflow-hidden bg-[#7a796f]">
        <CrimeMap />
        <a href="#legal" className="absolute bottom-[16px] left-[22px] text-lg leading-6 font-bold text-[#3f3f3b] underline">
          Legal
        </a>
      </main>
      <ToolBar />
      <DateDialog />
    </div>
  );
}
